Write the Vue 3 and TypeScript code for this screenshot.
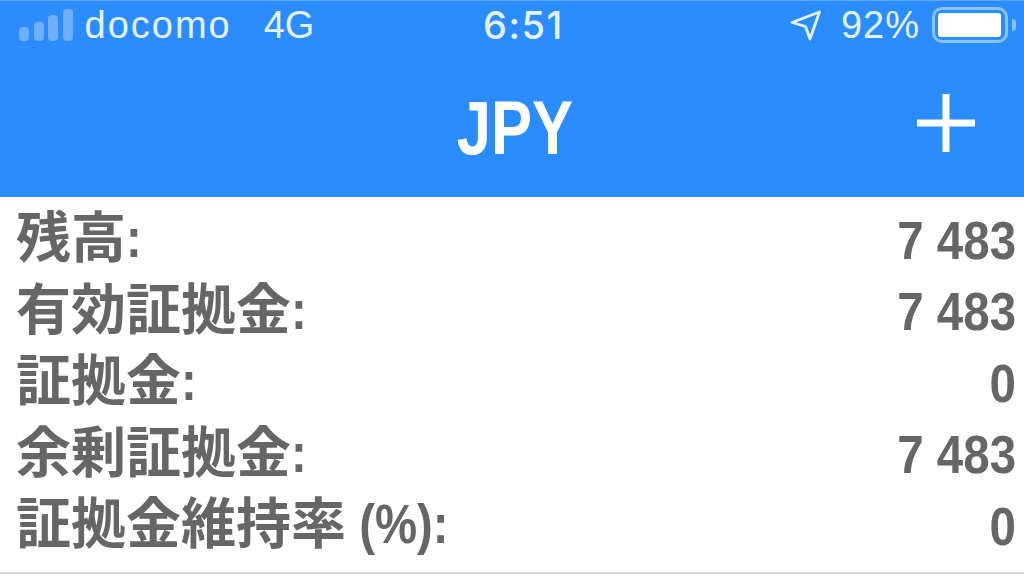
<script setup lang="ts">
const rows = [
  { label: "残高", suffix: ":", value: "7 483" },
  { label: "有効証拠金", suffix: ":", value: "7 483" },
  { label: "証拠金", suffix: ":", value: "0" },
  { label: "余剰証拠金", suffix: ":", value: "7 483" },
  { label: "証拠金維持率", suffix: " (%):", value: "0" },
];

const signalBars = [14, 19, 26, 32];
</script>

<template>
  <main class="screen">
    <header class="app-bar">
      <div class="status-bar">
        <div class="status-left">
          <span class="signal">
            <i
              v-for="(height, index) in signalBars"
              :key="index"
              :style="{ height: height + 'px' }"
            ></i>
          </span>
          <span class="carrier">docomo</span>
          <span class="network">4G</span>
        </div>
        <span class="clock">6:51</span>
        <div class="status-right">
          <svg class="location" width="32" height="32" viewBox="0 0 32 32">
            <path d="M2 13.5 29.5 3 20 30 15.5 17.5Z" fill="none" stroke="#e4f1ff" stroke-width="2.8" stroke-linejoin="round" />
          </svg>
          <span class="percent">92%</span>
          <div class="battery">
            <div class="battery-fill"></div>
          </div>
          <span class="battery-cap"></span>
        </div>
      </div>
      <div class="nav-bar">
        <h1>JPY</h1>
        <svg class="add" width="60" height="60" viewBox="0 0 60 60">
          <path d="M30 1V59M1 30H59" stroke="#fff" stroke-width="7" />
        </svg>
      </div>
    </header>

    <section class="summary">
      <div v-for="row in rows" :key="row.label" class="summary-row">
        <span class="label">{{ row.label }}<span class="suffix">{{ row.suffix }}</span></span>
        <span class="value">{{ row.value }}</span>
      </div>
    </section>
  </main>
</template>

<style>
html,
body {
  margin: 0;
  background: #fff;
  overflow: hidden;
}
</style>

<style scoped>
.screen {
  width: 1024px;
  height: 577px;
  display: flex;
  flex-direction: column;
  font-family: "Liberation Sans", "Noto Sans CJK JP", sans-serif;
  background: #fff;
}

.app-bar {
  height: 197px;
  box-sizing: border-box;
  padding-top: 1px;
  display: flex;
  flex-direction: column;
  background: #2a8cff;
  border-top: 1px solid #5aa8ff;
}

.status-bar {
  height: 46px;
  position: relative;
  padding: 0 8px 0 19px;
  display: flex;
  align-items: center;
  justify-content: space-between;
  color: #e4f1ff;
  font-size: 38px;
}

.status-left,
.status-right {
  display: flex;
  align-items: center;
}

.signal {
  display: flex;
  align-items: flex-end;
  gap: 4.5px;
  margin-right: 12px;
}

.signal i {
  width: 10px;
  border-radius: 4px;
  background: #6eb0ff;
}

.carrier {
  letter-spacing: 2px;
}

.network {
  margin-left: 32px;
}

.clock {
  position: absolute;
  left: 483px;
  top: 0;
  font-weight: 500;
  font-family: Inter, "Liberation Sans", sans-serif;
  font-size: 38px;
  letter-spacing: 1.5px;
}

.location {
  margin-right: 19px;
}

.percent {
  letter-spacing: 1px;
}

.battery {
  width: 76px;
  height: 36px;
  margin-left: 12px;
  box-sizing: border-box;
  padding: 3px;
  border: 3px solid #8cc2ff;
  border-radius: 10px;
}

.battery-fill {
  width: 98%;
  height: 100%;
  border-radius: 3px;
  background: #fff;
}

.battery-cap {
  width: 4px;
  height: 12px;
  margin-left: 4px;
  border-radius: 0 6px 6px 0;
  background: #8cc2ff;
}

.nav-bar {
  flex: 1;
  position: relative;
  display: flex;
  align-items: center;
  justify-content: center;
}

.nav-bar h1 {
  margin: 10px 0 0 6px;
  color: #fff;
  font-size: 76px;
  font-weight: 700;
  line-height: 1;
  transform: scaleX(0.81);
}

.add {
  position: absolute;
  right: 48px;
  top: 45px;
}

.summary {
  flex: 1;
  box-sizing: border-box;
  padding: 7px 8px 0 16px;
  border-bottom: 2px solid #d4d4d4;
  margin-bottom: 3px;
}

.summary-row {
  height: 71.5px;
  display: flex;
  align-items: center;
  justify-content: space-between;
  color: #666;
  font-size: 54px;
  font-weight: 700;
  line-height: 1;
}

.label {
  padding-bottom: 2px;
  font-size: 55px;
}

/* Latin glyphs in this app's font run narrower than the CJK ones */
.suffix {
  display: inline-block;
  white-space: pre;
  transform: scaleX(0.86);
  transform-origin: left center;
}

.value {
  transform: scaleX(0.88);
  transform-origin: right center;
}
</style>
